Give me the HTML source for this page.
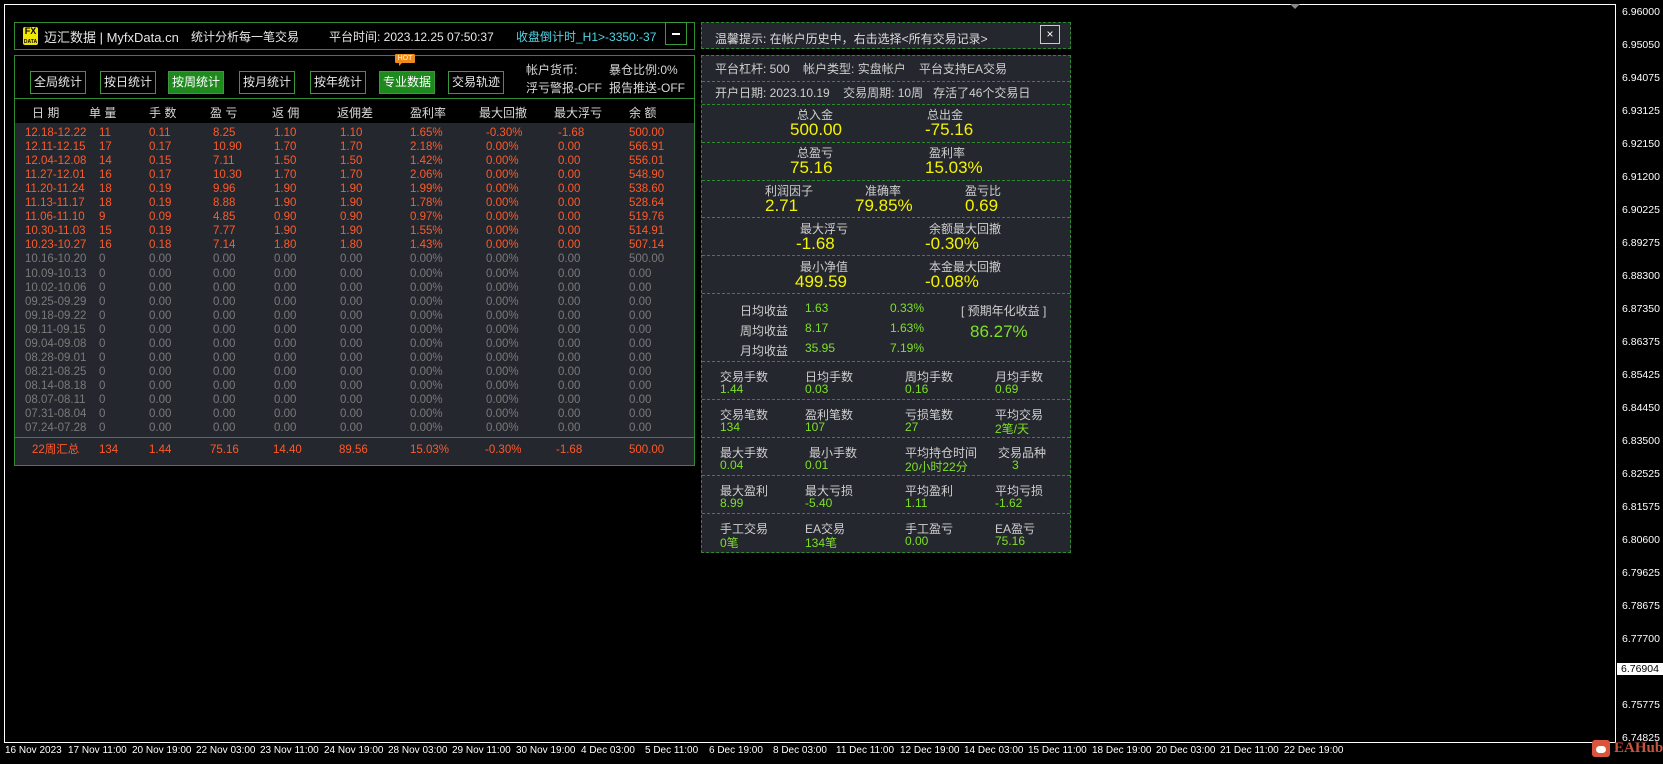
<!DOCTYPE html>
<html><head><meta charset="utf-8"><style>
*{margin:0;padding:0;box-sizing:border-box}
body{width:1663px;height:764px;background:#000;position:relative;overflow:hidden;font-family:"Liberation Sans","Noto Sans CJK SC",sans-serif;font-size:12px;color:#d8d8d8}
.a{position:absolute;white-space:nowrap}
.ax{font-size:10.5px;color:#fff}
.bx{font-size:10px;color:#fff;position:absolute;top:745px;white-space:nowrap}
.box{position:absolute;border:1px solid #2e8b2e}
.btn{position:absolute;top:71px;width:56px;height:23px;border:1px solid #3a9a3a;color:#e8e8e8;text-align:center;line-height:21px;font-size:12px;white-space:nowrap}
.btn.g{background:#1e8a1e;color:#fff}
.row{position:absolute;left:0;width:700px;height:14px;line-height:14px;font-size:11.5px;white-space:nowrap}
.row span{position:absolute;top:0;white-space:nowrap}
.r{color:#ff5a2a}.gy{color:#7a7a7a}
.dl{position:absolute;left:702px;width:368px;border-top:1px dashed #2e8b2e}
.y{color:#f4f400;font-size:17px}
.gn{color:#7ee026}
.lb{color:#cfcfcf}
</style></head><body>
<div class="a" style="left:4px;top:4px;width:1612px;height:739px;border:1px solid #fff"></div>
<div class="a" style="left:1290px;top:4px;width:0;height:0;border-left:5px solid transparent;border-right:5px solid transparent;border-top:5px solid #888"></div>
<div class="a ax" style="left:1622px;top:6px">6.96000</div>
<div class="a ax" style="left:1622px;top:39px">6.95050</div>
<div class="a ax" style="left:1622px;top:72px">6.94075</div>
<div class="a ax" style="left:1622px;top:105px">6.93125</div>
<div class="a ax" style="left:1622px;top:138px">6.92150</div>
<div class="a ax" style="left:1622px;top:171px">6.91200</div>
<div class="a ax" style="left:1622px;top:204px">6.90225</div>
<div class="a ax" style="left:1622px;top:237px">6.89275</div>
<div class="a ax" style="left:1622px;top:270px">6.88300</div>
<div class="a ax" style="left:1622px;top:303px">6.87350</div>
<div class="a ax" style="left:1622px;top:336px">6.86375</div>
<div class="a ax" style="left:1622px;top:369px">6.85425</div>
<div class="a ax" style="left:1622px;top:402px">6.84450</div>
<div class="a ax" style="left:1622px;top:435px">6.83500</div>
<div class="a ax" style="left:1622px;top:468px">6.82525</div>
<div class="a ax" style="left:1622px;top:501px">6.81575</div>
<div class="a ax" style="left:1622px;top:534px">6.80600</div>
<div class="a ax" style="left:1622px;top:567px">6.79625</div>
<div class="a ax" style="left:1622px;top:600px">6.78675</div>
<div class="a ax" style="left:1622px;top:633px">6.77700</div>
<div class="a ax" style="left:1622px;top:666px">6.76750</div>
<div class="a ax" style="left:1622px;top:699px">6.75775</div>
<div class="a ax" style="left:1622px;top:732px">6.74825</div>
<div class="a" style="left:1617px;top:663px;width:46px;height:12px;background:#fff;color:#000;font-size:10.5px;line-height:12px;padding-left:4px">6.76904</div>
<div class="bx" style="left:5px">16 Nov 2023</div>
<div class="bx" style="left:68px">17 Nov 11:00</div>
<div class="bx" style="left:132px">20 Nov 19:00</div>
<div class="bx" style="left:196px">22 Nov 03:00</div>
<div class="bx" style="left:260px">23 Nov 11:00</div>
<div class="bx" style="left:324px">24 Nov 19:00</div>
<div class="bx" style="left:388px">28 Nov 03:00</div>
<div class="bx" style="left:452px">29 Nov 11:00</div>
<div class="bx" style="left:516px">30 Nov 19:00</div>
<div class="bx" style="left:581px">4 Dec 03:00</div>
<div class="bx" style="left:645px">5 Dec 11:00</div>
<div class="bx" style="left:709px">6 Dec 19:00</div>
<div class="bx" style="left:773px">8 Dec 03:00</div>
<div class="bx" style="left:836px">11 Dec 11:00</div>
<div class="bx" style="left:900px">12 Dec 19:00</div>
<div class="bx" style="left:964px">14 Dec 03:00</div>
<div class="bx" style="left:1028px">15 Dec 11:00</div>
<div class="bx" style="left:1092px">18 Dec 19:00</div>
<div class="bx" style="left:1156px">20 Dec 03:00</div>
<div class="bx" style="left:1220px">21 Dec 11:00</div>
<div class="bx" style="left:1284px">22 Dec 19:00</div>
<div class="a" style="left:1592px;top:740px;width:18px;height:17px;background:#d9563c;border-radius:3px"><div style="position:absolute;left:4px;top:6px;width:10px;height:7px;background:#fff;border-radius:4px"></div></div>
<div class="a" style="left:1614px;top:740px;color:#c9553f;font-family:'Liberation Serif',serif;font-size:15px;font-weight:bold">EAHub</div>

<div class="box" style="left:14px;top:22px;width:681px;height:28px"></div>
<div class="a" style="left:23px;top:27px;width:15px;height:18px;background:#f2e600;border-radius:2px;color:#000;font-weight:bold;text-align:center;font-size:9px;line-height:9px;overflow:hidden">FX<br><span style="font-size:5px;line-height:6px">DATA</span></div>
<div class="a" style="left:44px;top:27px;font-size:13px;color:#e6e6e6">迈汇数据 | MyfxData.cn</div>
<div class="a" style="left:191px;top:28px;font-size:12px;color:#e6e6e6">统计分析每一笔交易</div>
<div class="a" style="left:329px;top:28px;font-size:12px;color:#e6e6e6">平台时间: 2023.12.25 07:50:37</div>
<div class="a" style="left:516px;top:28px;font-size:12px;color:#4fd6e6">收盘倒计时_H1&gt;-3350:-37</div>
<div class="box" style="left:665px;top:22px;width:22px;height:23px;border-color:#3a9a3a"><div style="position:absolute;left:6px;top:10px;width:8px;height:2px;background:#fff"></div></div>

<div class="box" style="left:14px;top:55px;width:681px;height:411px"></div>
<div class="a" style="left:15px;top:98px;width:679px;height:1px;background:#2e8b2e"></div>
<div class="btn" style="left:30px">全局统计</div>
<div class="btn" style="left:100px">按日统计</div>
<div class="btn g" style="left:168px">按周统计</div>
<div class="btn" style="left:239px">按月统计</div>
<div class="btn" style="left:310px">按年统计</div>
<div class="btn g" style="left:379px">专业数据</div>
<div class="btn" style="left:448px">交易轨迹</div>
<div class="a" style="left:395px;top:54px;width:20px;height:9px;background:#f08a1a;color:#fff;font-size:7px;line-height:9px;text-align:center;border-radius:1px">HOT</div>
<div class="a" style="left:399px;top:63px;width:0;height:0;border-left:3px solid #f08a1a;border-bottom:3px solid transparent"></div>
<div class="a" style="left:526px;top:61px">帐户货币:</div>
<div class="a" style="left:609px;top:61px">暴仓比例:0%</div>
<div class="a" style="left:526px;top:79px">浮亏警报-OFF</div>
<div class="a" style="left:609px;top:79px">报告推送-OFF</div>
<div class="a" style="top:104px;left:0;width:700px;height:14px">
<span class="a" style="left:32px">日 期</span><span class="a" style="left:89px">单 量</span><span class="a" style="left:149px">手 数</span><span class="a" style="left:210px">盈 亏</span><span class="a" style="left:272px">返 佣</span><span class="a" style="left:337px">返佣差</span><span class="a" style="left:410px">盈利率</span><span class="a" style="left:479px">最大回撤</span><span class="a" style="left:554px">最大浮亏</span><span class="a" style="left:629px">余 额</span></div>
<div class="a" style="left:15px;top:123px;width:679px;height:314px;background:#24272e"></div>
<div class="a" style="left:15px;top:437px;width:679px;height:1px;background:#2e8b2e"></div>
<div class="a" style="left:15px;top:438px;width:679px;height:27px;background:#24272e"></div>
<div class="a" style="left:0;top:126px;width:700px;height:310px">
<div class="row r" style="top:0px"><span style="left:25px">12.18-12.22</span><span style="left:99px">11</span><span style="left:149px">0.11</span><span style="left:213px">8.25</span><span style="left:274px">1.10</span><span style="left:340px">1.10</span><span style="left:410px">1.65%</span><span style="left:486px">-0.30%</span><span style="left:558px">-1.68</span><span style="left:629px">500.00</span></div>
<div class="row r" style="top:14.05px"><span style="left:25px">12.11-12.15</span><span style="left:99px">17</span><span style="left:149px">0.17</span><span style="left:213px">10.90</span><span style="left:274px">1.70</span><span style="left:340px">1.70</span><span style="left:410px">2.18%</span><span style="left:486px">0.00%</span><span style="left:558px">0.00</span><span style="left:629px">566.91</span></div>
<div class="row r" style="top:28.1px"><span style="left:25px">12.04-12.08</span><span style="left:99px">14</span><span style="left:149px">0.15</span><span style="left:213px">7.11</span><span style="left:274px">1.50</span><span style="left:340px">1.50</span><span style="left:410px">1.42%</span><span style="left:486px">0.00%</span><span style="left:558px">0.00</span><span style="left:629px">556.01</span></div>
<div class="row r" style="top:42.15px"><span style="left:25px">11.27-12.01</span><span style="left:99px">16</span><span style="left:149px">0.17</span><span style="left:213px">10.30</span><span style="left:274px">1.70</span><span style="left:340px">1.70</span><span style="left:410px">2.06%</span><span style="left:486px">0.00%</span><span style="left:558px">0.00</span><span style="left:629px">548.90</span></div>
<div class="row r" style="top:56.2px"><span style="left:25px">11.20-11.24</span><span style="left:99px">18</span><span style="left:149px">0.19</span><span style="left:213px">9.96</span><span style="left:274px">1.90</span><span style="left:340px">1.90</span><span style="left:410px">1.99%</span><span style="left:486px">0.00%</span><span style="left:558px">0.00</span><span style="left:629px">538.60</span></div>
<div class="row r" style="top:70.25px"><span style="left:25px">11.13-11.17</span><span style="left:99px">18</span><span style="left:149px">0.19</span><span style="left:213px">8.88</span><span style="left:274px">1.90</span><span style="left:340px">1.90</span><span style="left:410px">1.78%</span><span style="left:486px">0.00%</span><span style="left:558px">0.00</span><span style="left:629px">528.64</span></div>
<div class="row r" style="top:84.3px"><span style="left:25px">11.06-11.10</span><span style="left:99px">9</span><span style="left:149px">0.09</span><span style="left:213px">4.85</span><span style="left:274px">0.90</span><span style="left:340px">0.90</span><span style="left:410px">0.97%</span><span style="left:486px">0.00%</span><span style="left:558px">0.00</span><span style="left:629px">519.76</span></div>
<div class="row r" style="top:98.35px"><span style="left:25px">10.30-11.03</span><span style="left:99px">15</span><span style="left:149px">0.19</span><span style="left:213px">7.77</span><span style="left:274px">1.90</span><span style="left:340px">1.90</span><span style="left:410px">1.55%</span><span style="left:486px">0.00%</span><span style="left:558px">0.00</span><span style="left:629px">514.91</span></div>
<div class="row r" style="top:112.4px"><span style="left:25px">10.23-10.27</span><span style="left:99px">16</span><span style="left:149px">0.18</span><span style="left:213px">7.14</span><span style="left:274px">1.80</span><span style="left:340px">1.80</span><span style="left:410px">1.43%</span><span style="left:486px">0.00%</span><span style="left:558px">0.00</span><span style="left:629px">507.14</span></div>
<div class="row gy" style="top:126.45px"><span style="left:25px">10.16-10.20</span><span style="left:99px">0</span><span style="left:149px">0.00</span><span style="left:213px">0.00</span><span style="left:274px">0.00</span><span style="left:340px">0.00</span><span style="left:410px">0.00%</span><span style="left:486px">0.00%</span><span style="left:558px">0.00</span><span style="left:629px">500.00</span></div>
<div class="row gy" style="top:140.5px"><span style="left:25px">10.09-10.13</span><span style="left:99px">0</span><span style="left:149px">0.00</span><span style="left:213px">0.00</span><span style="left:274px">0.00</span><span style="left:340px">0.00</span><span style="left:410px">0.00%</span><span style="left:486px">0.00%</span><span style="left:558px">0.00</span><span style="left:629px">0.00</span></div>
<div class="row gy" style="top:154.55px"><span style="left:25px">10.02-10.06</span><span style="left:99px">0</span><span style="left:149px">0.00</span><span style="left:213px">0.00</span><span style="left:274px">0.00</span><span style="left:340px">0.00</span><span style="left:410px">0.00%</span><span style="left:486px">0.00%</span><span style="left:558px">0.00</span><span style="left:629px">0.00</span></div>
<div class="row gy" style="top:168.6px"><span style="left:25px">09.25-09.29</span><span style="left:99px">0</span><span style="left:149px">0.00</span><span style="left:213px">0.00</span><span style="left:274px">0.00</span><span style="left:340px">0.00</span><span style="left:410px">0.00%</span><span style="left:486px">0.00%</span><span style="left:558px">0.00</span><span style="left:629px">0.00</span></div>
<div class="row gy" style="top:182.65px"><span style="left:25px">09.18-09.22</span><span style="left:99px">0</span><span style="left:149px">0.00</span><span style="left:213px">0.00</span><span style="left:274px">0.00</span><span style="left:340px">0.00</span><span style="left:410px">0.00%</span><span style="left:486px">0.00%</span><span style="left:558px">0.00</span><span style="left:629px">0.00</span></div>
<div class="row gy" style="top:196.7px"><span style="left:25px">09.11-09.15</span><span style="left:99px">0</span><span style="left:149px">0.00</span><span style="left:213px">0.00</span><span style="left:274px">0.00</span><span style="left:340px">0.00</span><span style="left:410px">0.00%</span><span style="left:486px">0.00%</span><span style="left:558px">0.00</span><span style="left:629px">0.00</span></div>
<div class="row gy" style="top:210.75px"><span style="left:25px">09.04-09.08</span><span style="left:99px">0</span><span style="left:149px">0.00</span><span style="left:213px">0.00</span><span style="left:274px">0.00</span><span style="left:340px">0.00</span><span style="left:410px">0.00%</span><span style="left:486px">0.00%</span><span style="left:558px">0.00</span><span style="left:629px">0.00</span></div>
<div class="row gy" style="top:224.8px"><span style="left:25px">08.28-09.01</span><span style="left:99px">0</span><span style="left:149px">0.00</span><span style="left:213px">0.00</span><span style="left:274px">0.00</span><span style="left:340px">0.00</span><span style="left:410px">0.00%</span><span style="left:486px">0.00%</span><span style="left:558px">0.00</span><span style="left:629px">0.00</span></div>
<div class="row gy" style="top:238.85px"><span style="left:25px">08.21-08.25</span><span style="left:99px">0</span><span style="left:149px">0.00</span><span style="left:213px">0.00</span><span style="left:274px">0.00</span><span style="left:340px">0.00</span><span style="left:410px">0.00%</span><span style="left:486px">0.00%</span><span style="left:558px">0.00</span><span style="left:629px">0.00</span></div>
<div class="row gy" style="top:252.9px"><span style="left:25px">08.14-08.18</span><span style="left:99px">0</span><span style="left:149px">0.00</span><span style="left:213px">0.00</span><span style="left:274px">0.00</span><span style="left:340px">0.00</span><span style="left:410px">0.00%</span><span style="left:486px">0.00%</span><span style="left:558px">0.00</span><span style="left:629px">0.00</span></div>
<div class="row gy" style="top:266.95px"><span style="left:25px">08.07-08.11</span><span style="left:99px">0</span><span style="left:149px">0.00</span><span style="left:213px">0.00</span><span style="left:274px">0.00</span><span style="left:340px">0.00</span><span style="left:410px">0.00%</span><span style="left:486px">0.00%</span><span style="left:558px">0.00</span><span style="left:629px">0.00</span></div>
<div class="row gy" style="top:281px"><span style="left:25px">07.31-08.04</span><span style="left:99px">0</span><span style="left:149px">0.00</span><span style="left:213px">0.00</span><span style="left:274px">0.00</span><span style="left:340px">0.00</span><span style="left:410px">0.00%</span><span style="left:486px">0.00%</span><span style="left:558px">0.00</span><span style="left:629px">0.00</span></div>
<div class="row gy" style="top:295.05px"><span style="left:25px">07.24-07.28</span><span style="left:99px">0</span><span style="left:149px">0.00</span><span style="left:213px">0.00</span><span style="left:274px">0.00</span><span style="left:340px">0.00</span><span style="left:410px">0.00%</span><span style="left:486px">0.00%</span><span style="left:558px">0.00</span><span style="left:629px">0.00</span></div>
</div>
<div class="row r" style="top:443px"><span style="left:32px">22周汇总</span><span style="left:99px">134</span><span style="left:149px">1.44</span><span style="left:210px">75.16</span><span style="left:273px">14.40</span><span style="left:339px">89.56</span><span style="left:410px">15.03%</span><span style="left:485px">-0.30%</span><span style="left:556px">-1.68</span><span style="left:629px">500.00</span></div>

<div class="a" style="left:701px;top:22px;width:370px;height:27px;background:#24272e;border:1px dashed #2e8b2e"></div>
<div class="a" style="left:715px;top:30px;color:#dcdcdc">温馨提示: 在帐户历史中，右击选择&lt;所有交易记录&gt;</div>
<div class="a" style="left:1040px;top:25px;width:20px;height:19px;border:1px solid #ccc;color:#fff;text-align:center;line-height:17px;font-size:12px">×</div>
<div class="a" style="left:701px;top:55px;width:370px;height:498px;background:#24272e;border:1px dashed #2e8b2e"></div>
<div class="a lb" style="left:715px;top:60px">平台杠杆: 500&nbsp;&nbsp;&nbsp; 帐户类型: 实盘帐户&nbsp;&nbsp;&nbsp; 平台支持EA交易</div>
<div class="dl" style="top:81px"></div>
<div class="a lb" style="left:715px;top:84px">开户日期: 2023.10.19&nbsp;&nbsp;&nbsp; 交易周期: 10周&nbsp;&nbsp; 存活了46个交易日</div>
<div class="dl" style="top:104px"></div>
<div class="a lb" style="left:797px;top:106px">总入金</div><div class="a lb" style="left:927px;top:106px">总出金</div>
<div class="a y" style="left:790px;top:120px">500.00</div><div class="a y" style="left:925px;top:120px">-75.16</div>
<div class="dl" style="top:142px"></div>
<div class="a lb" style="left:797px;top:144px">总盈亏</div><div class="a lb" style="left:929px;top:144px">盈利率</div>
<div class="a y" style="left:790px;top:158px">75.16</div><div class="a y" style="left:925px;top:158px">15.03%</div>
<div class="dl" style="top:180px"></div>
<div class="a lb" style="left:765px;top:182px">利润因子</div><div class="a lb" style="left:865px;top:182px">准确率</div><div class="a lb" style="left:965px;top:182px">盈亏比</div>
<div class="a y" style="left:765px;top:196px">2.71</div><div class="a y" style="left:855px;top:196px">79.85%</div><div class="a y" style="left:965px;top:196px">0.69</div>
<div class="dl" style="top:217px"></div>
<div class="a lb" style="left:800px;top:220px">最大浮亏</div><div class="a lb" style="left:929px;top:220px">余额最大回撤</div>
<div class="a y" style="left:796px;top:234px">-1.68</div><div class="a y" style="left:925px;top:234px">-0.30%</div>
<div class="dl" style="top:255px"></div>
<div class="a lb" style="left:800px;top:258px">最小净值</div><div class="a lb" style="left:929px;top:258px">本金最大回撤</div>
<div class="a y" style="left:795px;top:272px">499.59</div><div class="a y" style="left:925px;top:272px">-0.08%</div>
<div class="dl" style="top:293px"></div>
<div class="a lb" style="left:740px;top:302px">日均收益</div><div class="a gn" style="left:805px;top:301px">1.63</div><div class="a gn" style="left:890px;top:301px">0.33%</div>
<div class="a lb" style="left:740px;top:322px">周均收益</div><div class="a gn" style="left:805px;top:321px">8.17</div><div class="a gn" style="left:890px;top:321px">1.63%</div>
<div class="a lb" style="left:740px;top:342px">月均收益</div><div class="a gn" style="left:805px;top:341px">35.95</div><div class="a gn" style="left:890px;top:341px">7.19%</div>
<div class="a lb" style="left:961px;top:302px">[ 预期年化收益 ]</div>
<div class="a gn" style="left:970px;top:322px;font-size:17px">86.27%</div>
<div class="dl" style="top:361px"></div>
<div class="a lb" style="left:720px;top:368px">交易手数</div><div class="a lb" style="left:805px;top:368px">日均手数</div><div class="a lb" style="left:905px;top:368px">周均手数</div><div class="a lb" style="left:995px;top:368px">月均手数</div>
<div class="a gn" style="left:720px;top:382px">1.44</div><div class="a gn" style="left:805px;top:382px">0.03</div><div class="a gn" style="left:905px;top:382px">0.16</div><div class="a gn" style="left:995px;top:382px">0.69</div>
<div class="dl" style="top:399px"></div>
<div class="a lb" style="left:720px;top:406px">交易笔数</div><div class="a lb" style="left:805px;top:406px">盈利笔数</div><div class="a lb" style="left:905px;top:406px">亏损笔数</div><div class="a lb" style="left:995px;top:406px">平均交易</div>
<div class="a gn" style="left:720px;top:420px">134</div><div class="a gn" style="left:805px;top:420px">107</div><div class="a gn" style="left:905px;top:420px">27</div><div class="a gn" style="left:995px;top:420px">2笔/天</div>
<div class="dl" style="top:437px"></div>
<div class="a lb" style="left:720px;top:444px">最大手数</div><div class="a lb" style="left:809px;top:444px">最小手数</div><div class="a lb" style="left:905px;top:444px">平均持仓时间</div><div class="a lb" style="left:998px;top:444px">交易品种</div>
<div class="a gn" style="left:720px;top:458px">0.04</div><div class="a gn" style="left:805px;top:458px">0.01</div><div class="a gn" style="left:905px;top:458px">20小时22分</div><div class="a gn" style="left:1012px;top:458px">3</div>
<div class="dl" style="top:475px"></div>
<div class="a lb" style="left:720px;top:482px">最大盈利</div><div class="a lb" style="left:805px;top:482px">最大亏损</div><div class="a lb" style="left:905px;top:482px">平均盈利</div><div class="a lb" style="left:995px;top:482px">平均亏损</div>
<div class="a gn" style="left:720px;top:496px">8.99</div><div class="a gn" style="left:805px;top:496px">-5.40</div><div class="a gn" style="left:905px;top:496px">1.11</div><div class="a gn" style="left:995px;top:496px">-1.62</div>
<div class="dl" style="top:513px"></div>
<div class="a lb" style="left:720px;top:520px">手工交易</div><div class="a lb" style="left:805px;top:520px">EA交易</div><div class="a lb" style="left:905px;top:520px">手工盈亏</div><div class="a lb" style="left:995px;top:520px">EA盈亏</div>
<div class="a gn" style="left:720px;top:534px">0笔</div><div class="a gn" style="left:805px;top:534px">134笔</div><div class="a gn" style="left:905px;top:534px">0.00</div><div class="a gn" style="left:995px;top:534px">75.16</div>
</body></html>
